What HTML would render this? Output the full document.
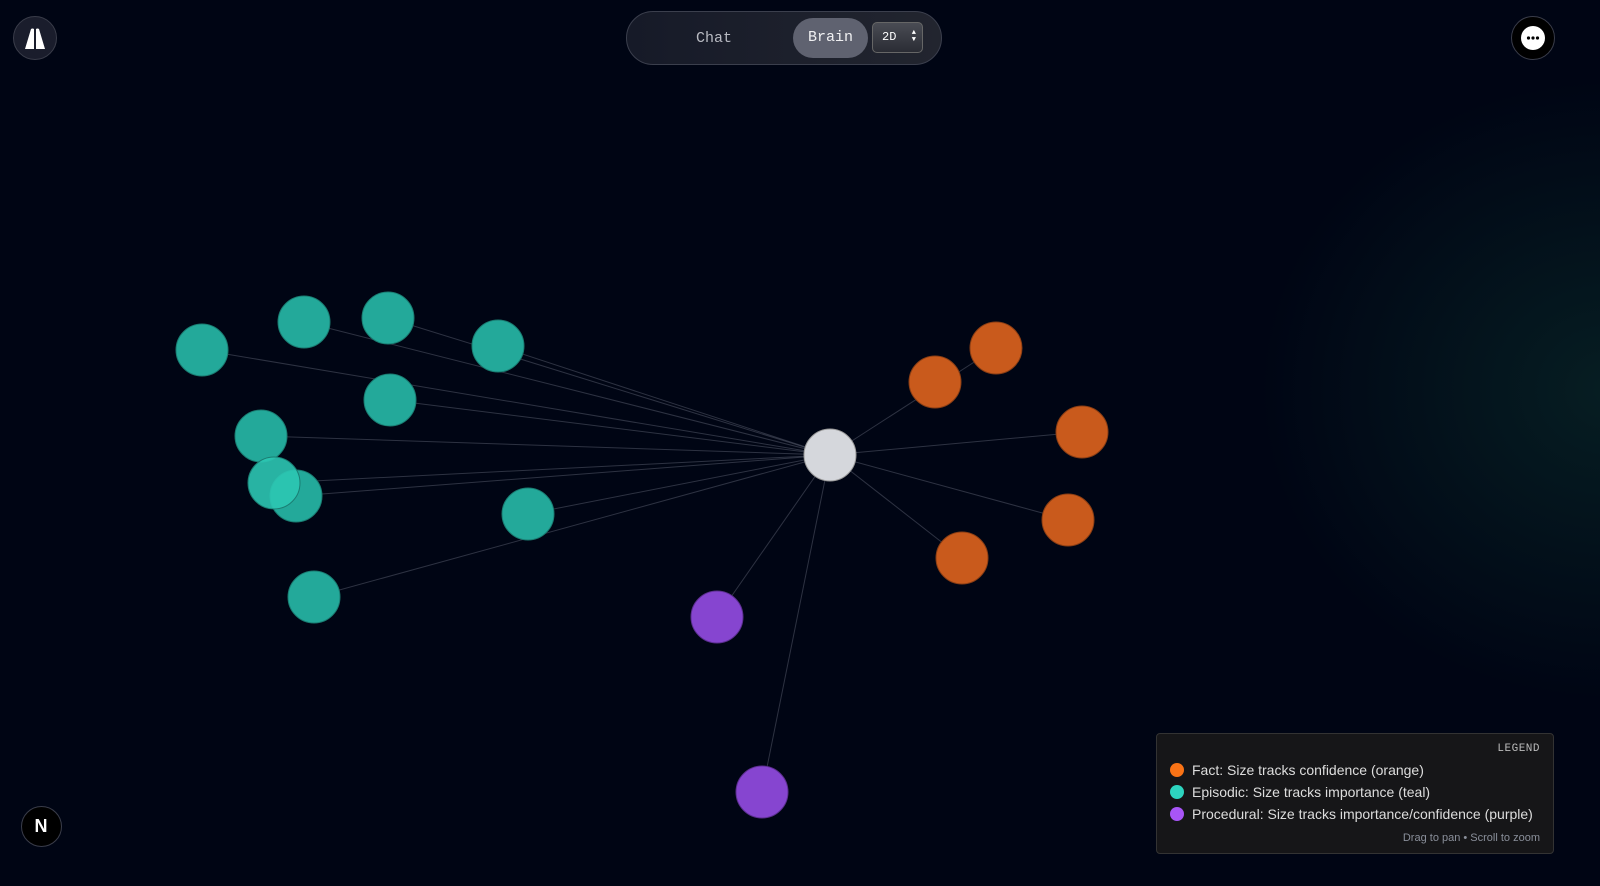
<!DOCTYPE html>
<html><head><meta charset="utf-8"><style>
body{margin:0;width:1600px;height:886px;overflow:hidden;background:#000514;font-family:"Liberation Mono",monospace;position:relative}
.glow{position:absolute;left:1260px;top:80px;width:700px;height:620px;background:radial-gradient(closest-side,rgba(14,60,52,0.45),rgba(0,5,20,0));}
.btn{position:absolute;border-radius:50%;border:1.5px solid #3a3d4a;box-sizing:border-box}
.tog{position:absolute;left:626px;top:11px;width:316px;height:54px;border-radius:27px;border:1px solid #3b3f4d;box-sizing:border-box;background:linear-gradient(90deg,#161a28,#22252f)}
.legend{position:absolute;left:1156px;top:733px;width:398px;height:121px;background:#161618;border:1px solid #333;border-radius:4px;box-sizing:border-box;font-family:"Liberation Sans",sans-serif;color:#ddd;font-size:14px}
.li{position:absolute;left:13px;display:flex;align-items:center;gap:8px}
.dot{width:14px;height:14px;border-radius:50%}
</style></head><body>
<div class="glow"></div>
<svg width="1600" height="886" style="position:absolute;left:0;top:0">
<g stroke="#5a6070" stroke-opacity="0.5" stroke-width="1">
<line x1="830" y1="455" x2="202" y2="350"/><line x1="830" y1="455" x2="304" y2="322"/><line x1="830" y1="455" x2="388" y2="318"/><line x1="830" y1="455" x2="498" y2="346"/><line x1="830" y1="455" x2="390" y2="400"/><line x1="830" y1="455" x2="261" y2="436"/><line x1="830" y1="455" x2="296" y2="496"/><line x1="830" y1="455" x2="274" y2="483"/><line x1="830" y1="455" x2="528" y2="514"/><line x1="830" y1="455" x2="314" y2="597"/>
<line x1="830" y1="455" x2="996" y2="348"/><line x1="830" y1="455" x2="1082" y2="432"/><line x1="830" y1="455" x2="1068" y2="520"/><line x1="830" y1="455" x2="962" y2="558"/><line x1="830" y1="455" x2="717" y2="617"/><line x1="830" y1="455" x2="762" y2="792"/>
</g>
<g fill="#23a99a" stroke="#1a7d72" stroke-width="1">
<circle cx="202" cy="350" r="26"/><circle cx="304" cy="322" r="26"/><circle cx="388" cy="318" r="26"/><circle cx="498" cy="346" r="26"/><circle cx="390" cy="400" r="26"/><circle cx="261" cy="436" r="26"/><circle cx="296" cy="496" r="26"/><circle cx="274" cy="483" r="26" fill="#2cc6b3" fill-opacity="0.9"/><circle cx="528" cy="514" r="26"/><circle cx="314" cy="597" r="26"/>
</g>
<g fill="#c95a1c" stroke="#8a3e14">
<circle cx="996" cy="348" r="26"/><circle cx="935" cy="382" r="26"/><circle cx="1082" cy="432" r="26"/><circle cx="1068" cy="520" r="26"/><circle cx="962" cy="558" r="26"/>
</g>
<g fill="#8645d0" stroke="#5c2f90">
<circle cx="717" cy="617" r="26"/><circle cx="762" cy="792" r="26"/>
</g>
<circle cx="830" cy="455" r="26" fill="#d5d7dc" stroke="#999"/>
</svg>
<div class="btn" style="left:13px;top:16px;width:44px;height:44px;background:#1a1d2c">
<svg width="44" height="44" style="position:absolute;left:-1.5px;top:-1.5px"><path d="M18 13 Q19.5 12 21 13 L21 33 L12 33 Z M26 13 Q24.5 12 23 13 L23 33 L32 33 Z" fill="#fff"/></svg></div>
<div class="btn" style="left:1511px;top:16px;width:44px;height:44px;background:#000"><div style="position:absolute;left:9px;top:9px;width:24px;height:24px;border-radius:50%;background:#fff"></div><svg width="44" height="44" style="position:absolute;left:-1.5px;top:-1.5px"><circle cx="17.5" cy="22" r="1.6" fill="#000"/><circle cx="22" cy="22" r="1.6" fill="#000"/><circle cx="26.5" cy="22" r="1.6" fill="#000"/></svg></div>
<div class="btn" style="left:21px;top:806px;width:41px;height:41px;background:#000"><div style="position:absolute;left:0;top:9px;width:38px;text-align:center;font:bold 18px 'Liberation Sans';color:#fff">N</div></div>
<div class="tog">
<div style="position:absolute;left:69px;top:18px;color:#b8bac2;font-size:15px">Chat</div>
<div style="position:absolute;left:166px;top:6px;width:75px;height:40px;border-radius:20px;background:#5f6270;color:#f0f0f2;font-size:15px;text-align:center;line-height:40px">Brain</div>
<div style="position:absolute;left:245px;top:10px;width:51px;height:31px;border-radius:5px;border:1px solid #666;box-sizing:border-box;background:linear-gradient(#4a4c54,#2a2c34);color:#fff;font-size:12px;line-height:29px;padding-left:9px">2D <span style="position:absolute;right:6px;top:7px;font-size:7px;line-height:7px">▲<br>▼</span></div>
</div>
<div class="legend">
<div style="position:absolute;right:13px;top:9px;font-family:'Liberation Mono';font-size:11px;color:#bbb;letter-spacing:0.5px">LEGEND</div>
<div class="li" style="top:28px"><div class="dot" style="background:#f97316"></div>Fact: Size tracks confidence (orange)</div>
<div class="li" style="top:50px"><div class="dot" style="background:#2dd4bf"></div>Episodic: Size tracks importance (teal)</div>
<div class="li" style="top:72px"><div class="dot" style="background:#a855f7"></div>Procedural: Size tracks importance/confidence (purple)</div>
<div style="position:absolute;right:13px;top:98px;font-size:11px;color:#8a8f9a">Drag to pan • Scroll to zoom</div>
</div>
</body></html>
